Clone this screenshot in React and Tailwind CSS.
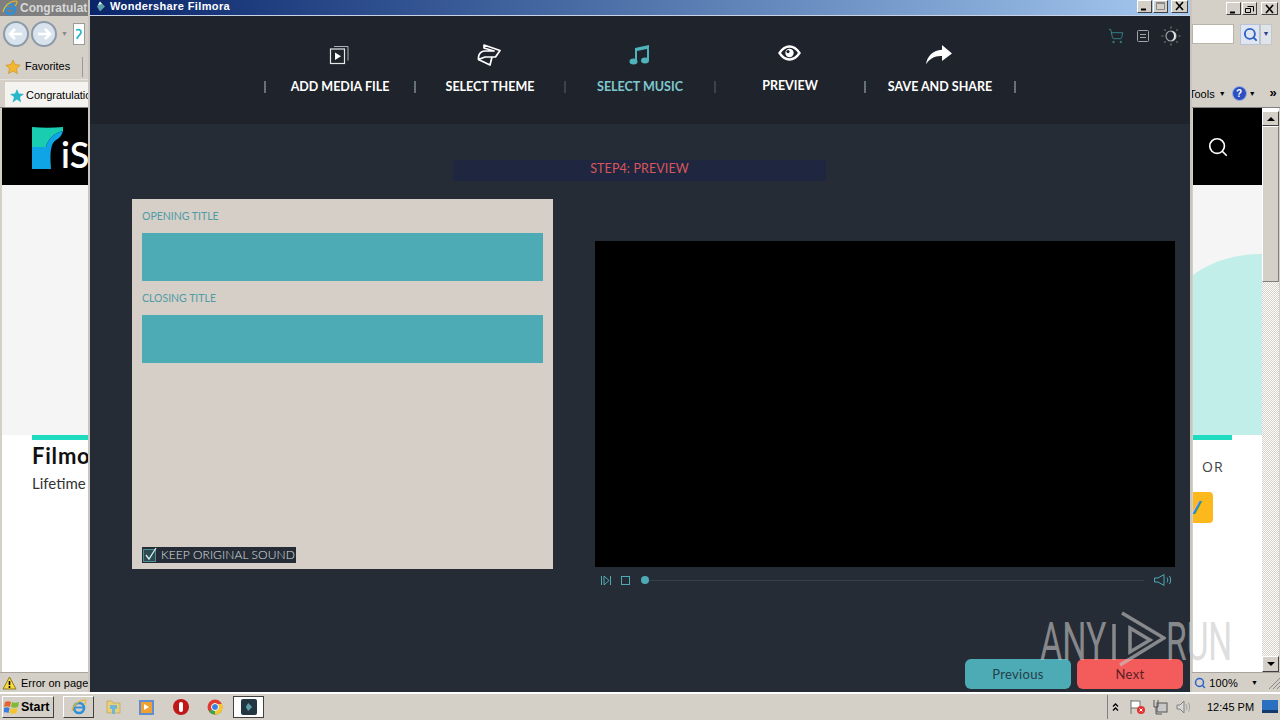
import React from 'react';
import { ShoppingCart, Search } from 'lucide-react';

function IeLogo({ size = 16 }) {
  return (
    <svg width={size} height={size} viewBox="0 0 16 16">
      <circle cx="8" cy="9" r="5" fill="none" stroke="#2f8fd8" strokeWidth="2.6" />
      <path d="M4 8.5h8.5" stroke="#2f8fd8" strokeWidth="1.8" />
      <path d="M1 12C2 6 8 1 14 1c1.5 0 1 3-1 5" fill="none" stroke="#e8b62c" strokeWidth="1.2" />
    </svg>
  );
}

function NavCircle({ flip }) {
  return (
    <div className="w-[26px] h-[26px] rounded-full border-2 border-[#8d9aa8] bg-[#d9e3ee] flex items-center justify-center">
      <svg width="16" height="14" viewBox="0 0 16 14" className={flip ? 'rotate-180' : ''}>
        <path d="M7 2 2 7l5 5M2 7h12" fill="none" stroke="#fff" strokeWidth="2.6" />
      </svg>
    </div>
  );
}

function WinButton({ type, wide }) {
  return (
    <div className={`${wide ? 'w-[17px]' : 'w-[15px]'} h-[13px] bg-[#d4d0c8] border border-t-white border-l-white border-r-[#404040] border-b-[#404040] flex items-center justify-center`}>
      <svg width="11" height="10" viewBox="0 0 11 10">
        {type === 'min' && <path d="M2 8.5h5" stroke="#000" strokeWidth="2" />}
        {type === 'max' && <path d="M1.5 1.5h8v7h-8zM1.5 2.5h8" fill="none" stroke="#8a8a8a" />}
        {type === 'restore' && <path d="M3.5 2.5h6v5M1.5 4.5h5v4h-5z" fill="none" stroke="#000" />}
        {type === 'close' && <path d="m2 1 7 8M9 1 2 9" stroke="#000" strokeWidth="1.6" />}
      </svg>
    </div>
  );
}

function BrowserLeftChrome() {
  return (
    <div className="w-[88px] flex flex-col overflow-hidden">
      <div className="h-[16px] bg-[#7f7f7f] flex items-center gap-[2px] pl-[2px] whitespace-nowrap overflow-hidden">
        <IeLogo />
        <span className="text-[12px] font-bold text-[#d8d8d8]">Congratulat</span>
      </div>
      <div className="h-[36px] flex items-center pl-[3px] gap-[2px]">
        <NavCircle />
        <NavCircle flip />
        <span className="text-[7px] text-[#8a8a8a] ml-[2px]">▼</span>
        <div className="w-[12px] h-[22px] bg-white border border-[#9a9a9a] ml-[3px] flex items-center justify-center">
          <svg width="8" height="12" viewBox="0 0 8 12" fill="none">
            <path d="M1 2c3-1 5 0 5 2 0 3-3 3-4 7" stroke="#2db7c9" strokeWidth="1.8" />
          </svg>
        </div>
      </div>
      <div className="h-[28px] flex items-center pl-[5px] pt-[2px] border-b border-[#e6e3dc]">
        <svg width="16" height="16" viewBox="0 0 16 16">
          <path d="m8 1 2.2 4.6 5 .6-3.7 3.4 1 5L8 12.100l-4.500 2.500 1-5L.8 6.200l5-.6z" fill="#f4b731" stroke="#c98a1a" strokeWidth=".6" />
        </svg>
        <span className="ml-[4px] text-[11px] text-black">Favorites</span>
        <div className="w-px h-[20px] bg-[#9a9a9a] ml-[12px]" />
      </div>
      <div className="h-[27px] flex items-end pl-[5px]">
        <div className="w-[83px] h-[25px] bg-[#f4f3ef] flex items-center pl-[5px] pt-[2px] whitespace-nowrap overflow-hidden">
          <svg width="14" height="14" viewBox="0 0 14 14" className="shrink-0">
            <path d="m7 0 1.800 4.500L14 5l-4 3 1 5.500-4-3-4.500 3L4 8 0 5l5-.5z" fill="#2ab7c9" />
          </svg>
          <span className="ml-[2px] text-[11px] text-black">Congratulation</span>
        </div>
      </div>
    </div>
  );
}

function BrowserRightChrome() {
  return (
    <div className="w-[88px] flex flex-col items-end overflow-hidden">
      <div className="h-[16px] flex items-start pt-[2px] pr-[2px] gap-px">
        <WinButton type="min" />
        <WinButton type="restore" />
        <div className="w-[2px]" />
        <WinButton type="close" wide />
      </div>
      <div className="h-[36px] w-full flex items-center">
        <div className="w-[42px] h-[20px] bg-white border border-[#b8b4aa]" />
        <div className="ml-[6px] w-[20px] h-[21px] bg-[#dfe6f2] border border-[#b8c2d4] flex items-center justify-center">
          <Search size={15} strokeWidth={3} className="text-[#2a62c9]" />
        </div>
        <div className="w-[12px] h-[21px] bg-[#dfe3ea] border border-[#c6c6c6] text-[7px] leading-[18px] text-center text-[#27408b]">▼</div>
      </div>
      <div className="h-[28px] w-full" />
      <div className="h-[27px] w-full flex items-start pt-[6px] text-[11px] text-black whitespace-nowrap">
        <span className="-ml-[3px]">Tools</span>
        <span className="text-[7px] ml-[4px] mt-[3px]">▼</span>
        <div className="ml-[6px] w-[15px] h-[15px] rounded-full bg-[#2a4fc0] border border-[#9db0e0] text-white text-[10px] font-bold leading-[13px] text-center">?</div>
        <span className="text-[7px] ml-[2px] mt-[3px]">▼</span>
        <span className="ml-[14px] text-[13px] font-bold leading-[13px]">»</span>
      </div>
    </div>
  );
}

function Scrollbar() {
  return (
    <div className="w-[17px] flex flex-col bg-[repeating-conic-gradient(#d4d0c8_0%_25%,#ffffff_0%_50%)] bg-[length:2px_2px]">
      <div className="h-[3px] bg-white" />
      <div className="h-[15px] bg-[#d4d0c8] border border-t-white border-l-white border-r-[#404040] border-b-[#404040] flex items-center justify-center">
        <div className="w-0 h-0 border-x-[4px] border-x-transparent border-b-[4px] border-b-black" />
      </div>
      <div className="h-[156px] bg-[#d4d0c8] border border-t-white border-l-white border-r-[#808080] border-b-[#808080]" />
      <div className="flex-1" />
      <div className="h-[16px] bg-[#d4d0c8] border border-t-white border-l-white border-r-[#404040] border-b-[#404040] flex items-center justify-center">
        <div className="w-0 h-0 border-x-[4px] border-x-transparent border-t-[4px] border-t-black" />
      </div>
    </div>
  );
}

function PageLeft() {
  return (
    <div className="w-[86px] flex flex-col overflow-hidden">
      <div className="h-[77px] bg-black flex items-start pl-[30px] pt-[19px] shrink-0">
        <svg width="31" height="42" viewBox="0 0 31 42" className="shrink-0">
          <path d="M0 0c10 1 21 1 31 0v4c-9 2-15 8-17 16H0z" fill="#19cdb1" />
          <path d="M0 20h14c2-8 8-14 17-16-1 4-3 7-7 9-6 4-6 14-5 29H0z" fill="#0ea4e6" />
        </svg>
        <span className="-ml-[2px] mt-[9px] text-white text-[36px] leading-none font-semibold whitespace-nowrap font-['Lato',sans-serif]">iS</span>
      </div>
      <div className="h-[250px] bg-[#f5f5f5] shrink-0" />
      <div className="flex-1 bg-white pl-[30px] font-['Lato',sans-serif] whitespace-nowrap overflow-hidden">
        <div className="h-[5px] bg-[#1fdcc0]" />
        <div className="mt-px text-[22px] leading-[30px] font-bold tracking-[0.8px] text-[#111]">Filmora</div>
        <div className="mt-[3px] text-[15px] leading-[18px] text-[#333]">Lifetime</div>
      </div>
    </div>
  );
}

function PageRight() {
  return (
    <div className="flex-1 flex flex-col overflow-hidden">
      <div className="h-[77px] bg-black flex items-center pl-[14px] shrink-0">
        <Search size={22} strokeWidth={1.8} className="text-white" />
      </div>
      <div className="h-[250px] bg-[#f5f5f5] shrink-0 flex flex-col justify-end">
        <svg width="69" height="181" viewBox="0 0 69 181" className="block">
          <path d="M0 21C20 6 44 0 69 0v181H0z" fill="#c2eeea" />
        </svg>
      </div>
      <div className="flex-1 bg-white font-['Open_Sans',sans-serif] whitespace-nowrap">
        <div className="h-[5px] w-[39px] bg-[#1fdcc0]" />
        <div className="mt-[18px] ml-[9px] text-[14px] leading-[18px] tracking-[1px] text-[#444]">OR</div>
        <div className="mt-[16px] w-[20px] h-[31px] bg-[#fcb81c] rounded-r-[4px] text-[#1f8fe0] text-[18px] font-bold italic leading-[31px]">/</div>
      </div>
    </div>
  );
}

function Browser() {
  return (
    <div className="absolute inset-0 bg-[#d4d0c8] flex flex-col">
      <div className="flex justify-between h-[107px] shrink-0">
        <BrowserLeftChrome />
        <BrowserRightChrome />
      </div>
      <div className="flex-1 flex pl-[2px] pr-px border-t border-[#808080] min-h-0">
        <PageLeft />
        <div className="w-[1105px]" />
        <PageRight />
        <Scrollbar />
      </div>
      <div className="h-[20px] shrink-0 flex justify-between items-center bg-[#d4d0c8] border-t border-[#a8a49c] pl-[2px] pt-px">
        <div className="flex items-center gap-[4px] text-[11px] text-black whitespace-nowrap">
          <svg width="15" height="14" viewBox="0 0 15 14">
            <path d="M7.500 1 14 13H1z" fill="#f8d93c" stroke="#8a7a20" />
            <path d="M7.500 5v4M7.500 10v2" stroke="#000" strokeWidth="1.600" />
          </svg>
          <span>Error on page</span>
        </div>
        <div className="flex items-center text-[11px] text-black">
          <Search size={12} strokeWidth={3} className="text-[#2a62c9]" />
          <span className="ml-[3px] tracking-[0.2px]">100%</span>
          <span className="ml-[13px] text-[7px]">▼</span>
          <svg width="12" height="12" viewBox="0 0 12 12" fill="none" stroke="#8a8a8a" className="ml-[10px]">
            <path d="M1 12 12 1M5 12l7-7M9 12l3-3" />
          </svg>
        </div>
      </div>
    </div>
  );
}

function MediaIcon() {
  return (
    <svg width="20" height="20" viewBox="0 0 20 20" fill="none">
      <path d="M5 1.500h14v14" stroke="#aeb2b8" strokeWidth="1" />
      <rect x="1.500" y="4" width="14" height="14.500" stroke="#e4e6e8" strokeWidth="1.200" />
      <path d="M6 7.500v7.500l6-3.750z" fill="#fff" />
    </svg>
  );
}

function ThemeIcon() {
  return (
    <svg width="24" height="22" viewBox="0 0 24 22" fill="none" stroke="#fff" strokeWidth="1.700" strokeLinejoin="round">
      <path d="M7 1 23 6.500 18.500 13H8L1.500 15.500C1 11 3 8 7 7H17L7 4Z" />
      <path d="M1.500 15.500 13 21 15 13" />
    </svg>
  );
}

function MusicIcon() {
  return (
    <svg width="21" height="20" viewBox="0 0 21 20" fill="#4fb3bd">
      <path d="M6 3 20 0v3.500L8 6v10H6zM18 3h2v13h-2z" />
      <ellipse cx="4.500" cy="16.500" rx="4" ry="3" />
      <ellipse cx="16" cy="15.500" rx="4" ry="3" />
    </svg>
  );
}

function EyeIcon() {
  return (
    <svg width="23" height="16" viewBox="0 0 23 16" fill="none">
      <path d="M1.500 8C4.500 3.500 8 1.500 11.500 1.500S18.500 3.500 21.500 8C18.500 12.500 15 14.500 11.500 14.500S4.500 12.500 1.500 8Z" stroke="#fff" strokeWidth="2.300" />
      <circle cx="11.500" cy="8" r="4.200" fill="#fff" />
      <circle cx="10" cy="6.600" r="1.600" fill="#1f242c" />
    </svg>
  );
}

function ShareIcon() {
  return (
    <svg width="26" height="20" viewBox="0 0 26 20" fill="#fff">
      <path d="M16 0 26 8.500 16 16v-5C9 10.500 3.500 13.500 0 19.500 1 12 6 5.500 16 4.800z" />
    </svg>
  );
}

function SunIcon() {
  return (
    <svg width="20" height="20" viewBox="0 0 20 20" fill="none">
      <circle cx="10" cy="10" r="5" stroke="#a9adb0" strokeWidth="1.100" />
      <path d="M10 5a5 5 0 0 1 0 10c2-1.500 3-3 3-5s-1-3.500-3-5Z" fill="#e3e5e6" />
      <path d="M10 .500v2M10 17.500v2M.500 10h2M17.500 10h2M3.300 3.300l1.400 1.400M15.300 15.300l1.400 1.400M3.300 16.700l1.400-1.400M15.300 4.700l1.400-1.400" stroke="#777b80" strokeWidth="1.200" />
    </svg>
  );
}

const steps = [
  { label: 'ADD MEDIA FILE', icon: <MediaIcon />, sep: 'border-[#667079]' },
  { label: 'SELECT THEME', icon: <ThemeIcon />, sep: 'border-[#667079]' },
  { label: 'SELECT MUSIC', icon: <MusicIcon />, sep: 'border-[#3a424b]', active: true },
  { label: 'PREVIEW', icon: <EyeIcon />, sep: 'border-[#3a424b]', raised: true },
  { label: 'SAVE AND SHARE', icon: <ShareIcon />, sep: 'border-[#667079]', last: true },
];

function StepNav() {
  return (
    <div className="flex pl-[174px] pt-[27px]">
      {steps.map((s) => (
        <div key={s.label} className="w-[150px] flex flex-col">
          <div className={`h-[24px] flex items-center justify-center ${s.raised ? '-mt-[2px] mb-[2px]' : ''}`}>{s.icon}</div>
          <div
            className={`mt-[14px] h-[12px] leading-[12px] text-center whitespace-nowrap border-l-2 ${s.sep} ${s.last ? 'border-r-2 border-r-[#667079] w-[152px]' : ''} text-[12.5px] font-bold ${s.active ? 'text-[#7fc8cf]' : 'text-white'} font-['Lato',sans-serif]`}
          >
            <span className={s.raised ? 'relative -top-px' : ''}>{s.label}</span>
          </div>
        </div>
      ))}
    </div>
  );
}

function TitlePanel() {
  return (
    <div className="w-[421px] h-[370px] bg-[#d5cfc8] px-[10px] flex flex-col font-['Lato',sans-serif]">
      <div className="mt-[11px] h-[12px] leading-[12px] text-[10.5px] text-[#4f9ca4]">OPENING TITLE</div>
      <div className="mt-[11px] h-[48px] bg-[#4dabb5]" />
      <div className="mt-[11px] h-[12px] leading-[12px] text-[10.5px] text-[#4f9ca4]">CLOSING TITLE</div>
      <div className="mt-[11px] h-[48px] bg-[#4dabb5]" />
      <div className="mt-auto mb-[6px] w-[154px] h-[16px] bg-[#262c36] flex items-center">
        <svg width="16" height="16" viewBox="0 0 16 16" fill="none" className="shrink-0">
          <rect x="1.500" y="2.500" width="12" height="12" stroke="#4a8f96" fill="#2f4a50" />
          <path d="m4 8 3 4 7-11" stroke="#cfeef0" strokeWidth="1.300" />
        </svg>
        <span className="ml-[3px] text-[12px] font-light leading-none tracking-[0.1px] text-[#dde0e3] whitespace-nowrap">KEEP ORIGINAL SOUND</span>
      </div>
    </div>
  );
}

function VideoPlayer() {
  return (
    <div className="ml-[42px] mt-[42px] w-[580px] flex flex-col">
      <div className="h-[326px] bg-black" />
      <div className="h-[26px] flex items-center pl-[6px] pr-[2px]">
        <svg width="10" height="11" viewBox="0 0 10 11" fill="none" stroke="#4dabb5" strokeWidth="1">
          <path d="M.500 1v9M3 1l5 4.500L3 10zM9.500 1v9" />
        </svg>
        <svg width="9" height="9" viewBox="0 0 9 9" fill="none" className="ml-[10px]">
          <rect x=".500" y=".500" width="8" height="8" stroke="#4dabb5" />
        </svg>
        <div className="ml-[11px] w-[8px] h-[8px] rounded-full bg-[#4dabb5] shrink-0" />
        <div className="flex-1 h-px bg-[#35424b]" />
        <svg width="19" height="12" viewBox="0 0 19 12" fill="none" stroke="#4dabb5" strokeWidth="1" className="ml-[10px]">
          <path d="M.500 4H4L10 .500v11L4 8H.500zM13 3.500c1 1.500 1 3.500 0 5M15.500 2c1.500 2.500 1.500 5.500 0 8" />
        </svg>
      </div>
    </div>
  );
}

function Filmora() {
  return (
    <div className="absolute left-[88px] top-0 w-[1104px] h-[692px] bg-[#262c36] border-x-2 border-[#c9c6c0] flex flex-col">
      <div className="h-[16px] shrink-0 bg-gradient-to-r from-[#0a246a] to-[#a6caf0] border-b border-[#c9d3e6] flex items-center pl-[6px] pr-[2px] pb-[2px]">
        <svg width="10" height="11" viewBox="0 0 10 11">
          <path d="M4 .500 9 5.500 4 10.500 1 5.500z" fill="#5f9ea6" />
          <path d="M4 .500 6 3 2 4z" fill="#e8f2f3" />
        </svg>
        <span className="ml-[4px] text-[11px] font-bold text-white font-['Liberation_Sans',sans-serif] tracking-[0.38px]">Wondershare Filmora</span>
        <div className="ml-auto flex gap-px -mt-[1px]">
          <WinButton type="min" />
          <WinButton type="max" />
          <div className="w-px" />
          <WinButton type="close" wide />
        </div>
      </div>
      <div className="h-[108px] shrink-0 bg-[#1f242c] relative">
        <StepNav />
        <div className="absolute right-[9px] top-[10px] flex items-center gap-[10px]">
          <ShoppingCart size={16} strokeWidth={1.1} className="text-[#3f9ea6]" />
          <svg width="13" height="13" viewBox="0 0 13 13" fill="none" stroke="#9fa4a8" className="ml-[3px] mr-px">
            <rect x=".500" y=".500" width="11" height="11" rx="1" />
            <path d="M3 4.500h6M3 7.500h6" />
          </svg>
          <SunIcon />
        </div>
      </div>
      <div className="flex-1 flex flex-col pl-[42px] relative">
        <div className="mt-[36px] ml-[321px] w-[373px] h-[21px] bg-[#1f2640] text-center text-[12.5px] tracking-[0.1px] leading-[18px] text-[#d9575a] font-['Lato',sans-serif]">
          STEP4: PREVIEW
        </div>
        <div className="mt-[18px] flex items-start">
          <TitlePanel />
          <VideoPlayer />
        </div>
        <div className="mt-auto mb-[3px] mr-[7px] flex justify-end gap-[6px] text-[13px] tracking-[0.3px] font-['Lato',sans-serif]">
          <button type="button" className="w-[106px] h-[30px] pt-px rounded-[6px] bg-[#4dabb5] text-[#23414a]">Previous</button>
          <button type="button" className="w-[106px] h-[30px] pt-px rounded-[6px] bg-[#f45b5b] text-[#5a1f24]">Next</button>
        </div>
      </div>
    </div>
  );
}

function Watermark() {
  return (
    <div className="absolute left-[1040px] top-[610px] flex items-center pointer-events-none text-[#c8c8c8]/60 font-['Roboto',sans-serif]">
      <span className="inline-block w-[66px] origin-left scale-x-[0.63] text-[54px] leading-none mt-[4px]">ANY</span>
      <svg width="58" height="60" viewBox="0 0 58 60" fill="none" stroke="#c8c8c8" strokeOpacity=".6" strokeWidth="3.500" className="ml-[2px]">
        <path d="M14 3 56 28 12 55M6 14V50M22 18 42 30 22 42Z" />
      </svg>
      <span className="inline-block w-[62px] origin-left scale-x-[0.62] text-[54px] leading-none mt-[4px]">RUN</span>
    </div>
  );
}

function Taskbar() {
  return (
    <div className="h-[28px] shrink-0 bg-[#d4d0c8] border-t-2 border-t-white flex items-center pl-[2px] z-10 relative">
      <div className="w-[52px] h-[22px] bg-[#d4d0c8] border border-t-white border-l-white border-r-[#404040] border-b-[#404040] flex items-center pl-[1px]">
        <svg width="16" height="14" viewBox="0 0 16 14">
          <path d="M1 2c2-1 4-1 6 0l-1 5c-2-1-4-1-6 0z" fill="#e8622c" />
          <path d="M8 2c2 1 4 1 7 0l-1 5c-2 1-5 1-7 0z" fill="#7fb93a" />
          <path d="M0 8c2-1 4-1 5.500 0l-1 5c-2-1-4-1-5.500 0z" fill="#3a7de0" />
          <path d="M6.500 8c2 1 5 1 7 0l-1 5c-2 1-5 1-7 0z" fill="#f4c430" />
        </svg>
        <span className="ml-[1px] text-[12.5px] font-bold text-black font-['Liberation_Sans',sans-serif]">Start</span>
      </div>
      <div className="ml-[9px] w-[31px] h-[22px] border border-t-white border-l-white border-r-[#404040] border-b-[#404040] flex items-center justify-center">
        <IeLogo />
      </div>
      <svg width="15" height="16" viewBox="0 0 15 16" className="ml-[12px]">
        <path d="M1 2h5l1 2h7v10H1z" fill="#e8cf7a" stroke="#b89c4a" strokeWidth=".6" />
        <path d="M4 6h7v4H9v5H6v-5H4z" fill="#6fb6d8" />
      </svg>
      <div className="ml-[18px] w-[15px] h-[15px] bg-[#f0a030] border-2 border-[#5f8fd0] flex items-center justify-center">
        <div className="w-0 h-0 border-y-[3px] border-y-transparent border-l-[5px] border-l-white" />
      </div>
      <div className="ml-[19px] w-[16px] h-[16px] rounded-full bg-[#c01818] flex items-center justify-center">
        <div className="w-[4px] h-[10px] rounded-full bg-white" />
      </div>
      <svg width="16" height="16" viewBox="0 0 16 16" className="ml-[18px]">
        <circle cx="8" cy="8" r="7.500" fill="#e23b2e" />
        <path d="M8 8 14.500 12A7.500 7.500 0 0 1 2 12.500z" fill="#3aa655" />
        <path d="M8 8 8 15.500A7.500 7.500 0 0 0 15 5H8z" fill="#f7c52c" />
        <circle cx="8" cy="8" r="3.500" fill="#3b7de0" stroke="#fff" />
      </svg>
      <div className="ml-[10px] w-[31px] h-[22px] bg-white border border-[#404040] flex items-center justify-center">
        <div className="w-[16px] h-[16px] rounded-[2px] bg-[#243642] flex items-center justify-center">
          <svg width="8" height="10" viewBox="0 0 10 11">
            <path d="M4 .500 9 5.500 4 10.500 1 5.500z" fill="#5f9ea6" />
          </svg>
        </div>
      </div>
      <div className="ml-auto h-[24px] w-[173px] border-l border-[#808080] flex items-center pl-[4px] text-black">
        <svg width="7" height="10" viewBox="0 0 7 10" fill="none" stroke="#000" strokeWidth="1.300">
          <path d="M1 4.500 3.500 2 6 4.500M1 8.500 3.500 6 6 8.500" />
        </svg>
        <svg width="18" height="16" viewBox="0 0 18 16" className="ml-[10px]">
          <path d="M2 1v14M2 2h9v7H2" fill="#fff" stroke="#707070" />
          <circle cx="12" cy="11" r="4" fill="#e03030" />
          <path d="m10.500 9.500 3 3M13.500 9.500l-3 3" stroke="#fff" />
        </svg>
        <svg width="16" height="16" viewBox="0 0 16 16" className="ml-[5px]">
          <rect x="5" y="4" width="10" height="9" fill="#c8c8c8" stroke="#555" />
          <path d="M2 1v7h4V1M4 8v7h6" fill="none" stroke="#555" />
        </svg>
        <svg width="16" height="14" viewBox="0 0 16 14" className="ml-[8px]">
          <path d="M1 5h3l4-4v12L4 9H1z" fill="#d8d8d8" stroke="#808080" />
          <path d="M10 4c1 2 1 4 0 6M12.500 2.500c1.500 3 1.500 6 0 9" fill="none" stroke="#a0a0a0" />
        </svg>
        <span className="ml-[15px] text-[11px] whitespace-nowrap font-['Liberation_Sans',sans-serif]">12:45 PM</span>
        <svg width="16" height="14" viewBox="0 0 16 14" className="ml-[8px]">
          <rect width="16" height="12" fill="#2a6fc0" />
          <rect y="10" width="16" height="3" fill="#14386a" />
        </svg>
      </div>
    </div>
  );
}

export default function App() {
  return (
    <div className="w-[1280px] h-[720px] overflow-hidden flex flex-col font-['Liberation_Sans',sans-serif]">
      <div className="flex-1 relative">
        <Browser />
        <Filmora />
        <Watermark />
      </div>
      <Taskbar />
    </div>
  );
}
